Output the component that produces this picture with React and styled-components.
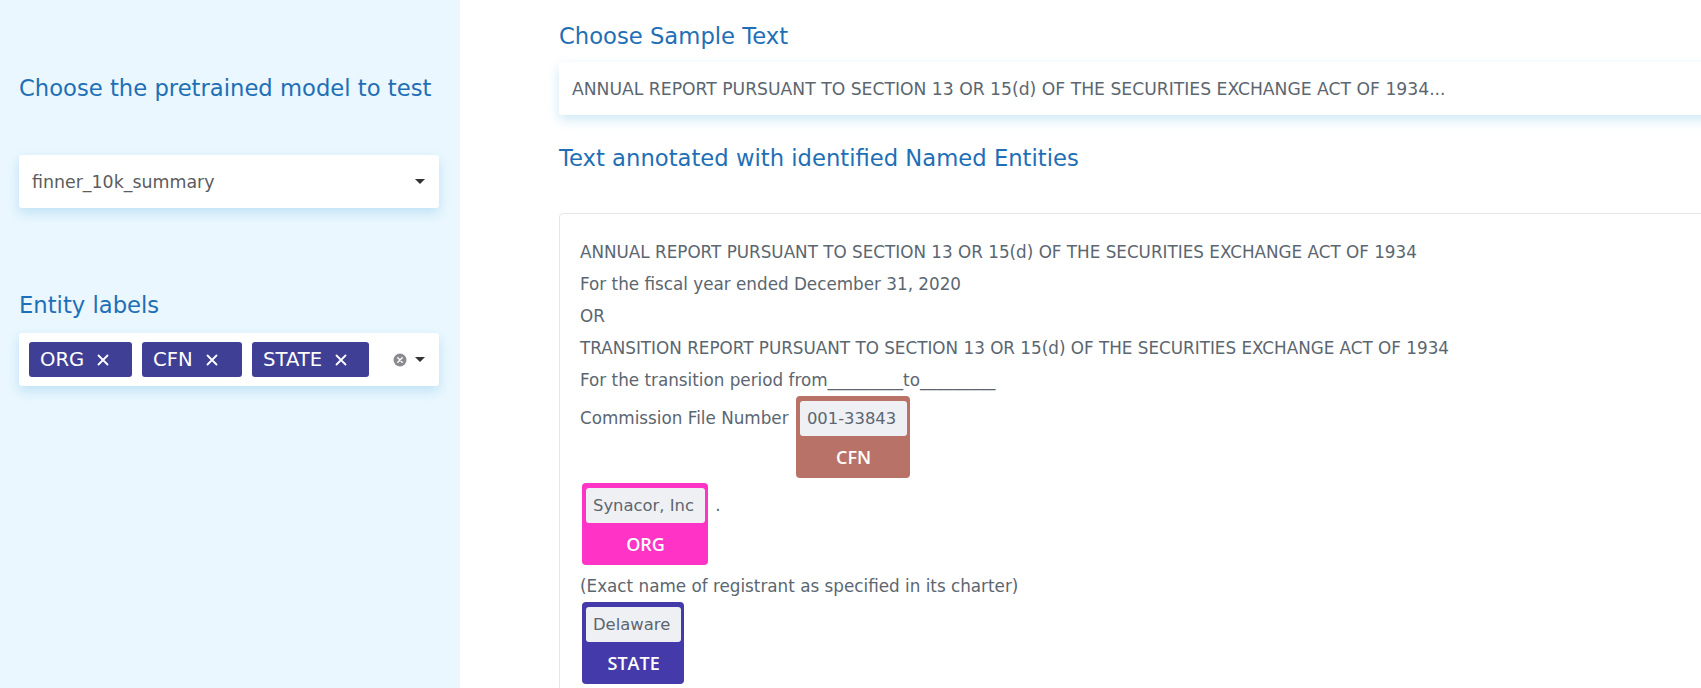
import React from "react";
import styled, { createGlobalStyle } from "styled-components";

const GlobalStyle = createGlobalStyle`
  html, body {
    margin: 0;
    padding: 0;
    height: 100%;
    overflow: hidden;
    background: #ffffff;
  }
  body {
    font-family: "DejaVu Sans", "Noto Sans", sans-serif;
  }
`;

const Page = styled.div`
  display: flex;
  width: 1701px;
  height: 688px;
  overflow: hidden;
`;

const Sidebar = styled.aside`
  flex: 0 0 460px;
  box-sizing: border-box;
  padding: 76px 21px 0 19px;
  background: #eaf7fe;
`;

const Heading = styled.h2`
  margin: 0;
  font-size: 22.7px;
  font-weight: 400;
  line-height: 24px;
  color: #1f6fb6;
  white-space: nowrap;
  margin-top: ${(p) => p.$top || 0}px;
  margin-bottom: ${(p) => p.$bottom || 0}px;
`;

const Card = styled.div`
  box-sizing: border-box;
  height: 53px;
  background: #ffffff;
  border-radius: 3px;
  box-shadow: 0 5px 12px rgba(40, 150, 215, 0.22);
  display: flex;
  align-items: center;
`;

const Select = styled(Card)`
  padding: 0 14px 0 13px;
  justify-content: space-between;
  font-size: 17.4px;
  color: #5c5c5c;
`;

const Caret = styled.span`
  width: 0;
  height: 0;
  border-left: 5px solid transparent;
  border-right: 5px solid transparent;
  border-top: 5px solid #333;
`;

const Multi = styled(Card)`
  padding: 0 14px 0 10px;
  gap: 10px;
`;

const Tag = styled.span`
  box-sizing: border-box;
  width: ${(p) => p.$w}px;
  height: 35px;
  display: inline-flex;
  align-items: center;
  gap: 13px;
  padding: 0 10px 0 11px;
  background: #3f3f95;
  color: #ffffff;
  border-radius: 3px;
  font-size: 19.6px;
`;

const Controls = styled.div`
  margin-left: auto;
  display: flex;
  align-items: center;
  gap: 8px;
`;

const Main = styled.main`
  flex: 1;
  min-width: 0;
  padding: 24px 0 0 99px;
  overflow: hidden;
`;

const SampleBox = styled(Card)`
  width: 1250px;
  padding: 0 13px;
  font-size: 17.2px;
  color: #5b6670;
  white-space: nowrap;
`;

const AnnotBox = styled.div`
  width: 1250px;
  min-height: 600px;
  box-sizing: border-box;
  padding: 22px 20px;
  border: 1px solid #e6e6ec;
  border-radius: 4px;
  font-size: 16.8px;
  line-height: 32px;
  color: #5b6670;
`;

const Line = styled.div`
  white-space: nowrap;
`;

const Entity = styled.span`
  display: inline-flex;
  flex-direction: column;
  vertical-align: baseline;
  margin: 0 2px 5px 2px;
  padding: 5px 3px 0 4px;
  border-radius: 4px;
  background: ${(p) => p.$color};
  line-height: 1;
`;

const EntityText = styled.span`
  padding: 8px 11px 8px 7px;
  background: #eff0f3;
  border-radius: 3px;
  font-size: 16.4px;
  line-height: 19px;
  color: #5b6670;
`;

const EntityType = styled.span`
  padding: 11px 0 11px;
  text-align: center;
  color: #ffffff;
  font-family: "Open Sans", "Noto Sans", sans-serif;
  font-size: 18px;
  font-weight: 600;
  line-height: 20px;
`;

const CloseX = () => (
  <svg width="12" height="12" viewBox="0 0 12 12">
    <path d="M1.5 1.5 L10.5 10.5 M10.5 1.5 L1.5 10.5" stroke="#fff" strokeWidth="1.8" strokeLinecap="round" />
  </svg>
);

const ClearIcon = () => (
  <svg width="14" height="14" viewBox="0 0 14 14">
    <circle cx="7" cy="7" r="6.5" fill="#8b8b8f" />
    <path d="M4.8 4.8 L9.2 9.2 M9.2 4.8 L4.8 9.2" stroke="#fff" strokeWidth="1.4" strokeLinecap="round" />
  </svg>
);

const tags = [
  { label: "ORG", w: 103 },
  { label: "CFN", w: 100 },
  { label: "STATE", w: 117 },
];

const Chip = ({ text, type, color }) => (
  <Entity $color={color}>
    <EntityText>{text}</EntityText>
    <EntityType>{type}</EntityType>
  </Entity>
);

export default function App() {
  return (
    <>
      <GlobalStyle />
      <Page>
        <Sidebar>
          <Heading $bottom={55}>Choose the pretrained model to test</Heading>
          <Select>
            <span>finner_10k_summary</span>
            <Caret />
          </Select>
          <Heading $top={85} $bottom={16}>Entity labels</Heading>
          <Multi>
            {tags.map((t) => (
              <Tag key={t.label} $w={t.w}>
                {t.label}
                <CloseX />
              </Tag>
            ))}
            <Controls>
              <ClearIcon />
              <Caret />
            </Controls>
          </Multi>
        </Sidebar>
        <Main>
          <Heading $bottom={14}>Choose Sample Text</Heading>
          <SampleBox>
            ANNUAL REPORT PURSUANT TO SECTION 13 OR 15(d) OF THE SECURITIES EXCHANGE ACT OF 1934...
          </SampleBox>
          <Heading $top={31} $bottom={43}>Text annotated with identified Named Entities</Heading>
          <AnnotBox>
            <Line>ANNUAL REPORT PURSUANT TO SECTION 13 OR 15(d) OF THE SECURITIES EXCHANGE ACT OF 1934</Line>
            <Line>For the fiscal year ended December 31, 2020</Line>
            <Line>OR</Line>
            <Line>TRANSITION REPORT PURSUANT TO SECTION 13 OR 15(d) OF THE SECURITIES EXCHANGE ACT OF 1934</Line>
            <Line>For the transition period from_________to_________</Line>
            <Line>
              Commission File Number <Chip text="001-33843" type="CFN" color="#b97268" />
            </Line>
            <Line>
              <Chip text="Synacor, Inc" type="ORG" color="#ff33c5" /> .
            </Line>
            <Line>(Exact name of registrant as specified in its charter)</Line>
            <Line>
              <Chip text="Delaware" type="STATE" color="#443aa9" />
            </Line>
          </AnnotBox>
        </Main>
      </Page>
    </>
  );
}
